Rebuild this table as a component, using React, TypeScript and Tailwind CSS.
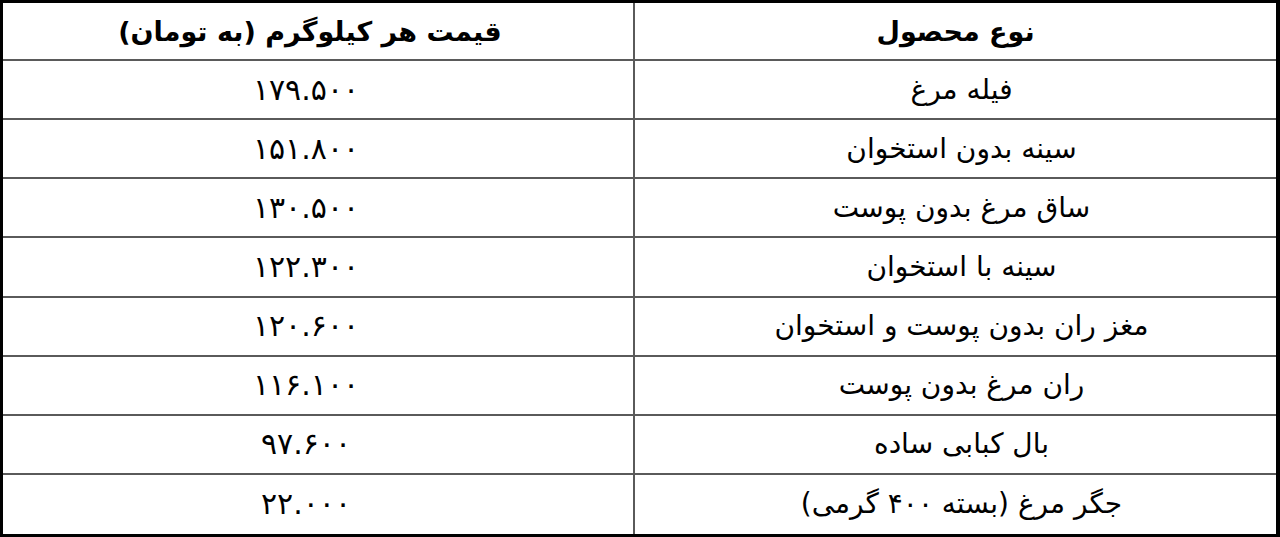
const rows: [string, string][] = [
  ["فیله مرغ", "۱۷۹.۵۰۰"],
  ["سینه بدون استخوان", "۱۵۱.۸۰۰"],
  ["ساق مرغ بدون پوست", "۱۳۰.۵۰۰"],
  ["سینه با استخوان", "۱۲۲.۳۰۰"],
  ["مغز ران بدون پوست و استخوان", "۱۲۰.۶۰۰"],
  ["ران مرغ بدون پوست", "۱۱۶.۱۰۰"],
  ["بال کبابی ساده", "۹۷.۶۰۰"],
  ["جگر مرغ (بسته ۴۰۰ گرمی)", "۲۲.۰۰۰"],
];

function Cell({ children, size, last, left }: { children: React.ReactNode; size: string; last?: boolean; left?: boolean }) {
  return (
    <div
      className={
        "flex items-center justify-center border-[#5a5a5a] " +
        (last ? "" : "border-b-2 ") +
        (left ? "border-r-2 " : "") +
        size
      }
    >
      {children}
    </div>
  );
}

export default function App() {
  return (
    <div
      dir="rtl"
      className="w-[1280px] h-[537px] bg-white text-black border-t-[3px] border-l-[3px] border-r-4 border-b-[3px] border-black grid grid-cols-[641px_1fr] grid-rows-[58px_repeat(8,1fr)] leading-none"
      style={{ fontFamily: '"DejaVu Sans", sans-serif' }}
    >
      <Cell size="font-bold text-[27px]">نوع محصول</Cell>
      <Cell size="font-bold text-[27px] pr-4" left>
        قیمت هر کیلوگرم (به تومان)
      </Cell>
      {rows.map(([name, price], i) => (
        <>
          <Cell key={name} size="text-[28px] pl-3" last={i === rows.length - 1}>
            {name}
          </Cell>
          <Cell key={price} size="text-[30px] pr-6" left last={i === rows.length - 1}>
            {price}
          </Cell>
        </>
      ))}
    </div>
  );
}
